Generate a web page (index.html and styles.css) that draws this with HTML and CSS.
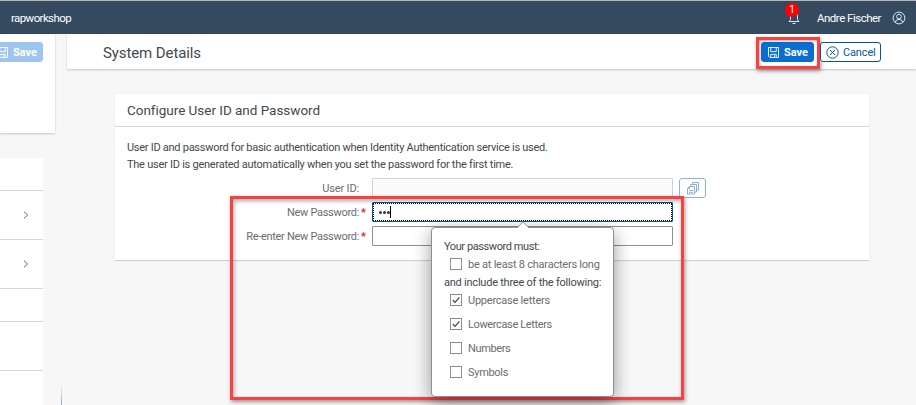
FILE: index.html
```html
<!DOCTYPE html>
<html lang="en">
<head>
<meta charset="utf-8">
<title>System Details</title>
<link rel="stylesheet" href="styles.css">
</head>
<body>
<header class="shell">
  <span class="brand">rapworkshop</span>
  <div class="bell">
    <svg width="12" height="14" viewBox="0 0 12 14" fill="none" stroke="#d1e8ff"><path d="M1 10.5H11L9.5 8.5V4.5Q9.5 1.5 6 1.5T2.5 4.5V8.5ZM4.5 12.5H7.5"/></svg>
    <span class="badge">1</span>
  </div>
  <span class="user">Andre Fischer</span>
  <svg class="avatar" width="14" height="14" viewBox="0 0 14 14" fill="none" stroke="#d1e8ff"><circle cx="7" cy="7" r="5.9"/><circle cx="7" cy="5.6" r="2.3"/><path d="M3.3 11.3Q3.8 8.3 7 8.3T10.700 11.300"/></svg>
</header>
<div class="layout">
  <aside class="side">
    <div class="side-head">
      <button class="btn primary faded"><svg width="11" height="11" viewBox="0 0 12 12" fill="none" stroke="currentColor"><path d="M.5.5H11.500V11.500H2L.5 10ZM3 .5V5H9V.5M3 11.500V8H9V11.500M7 9V11"/></svg><span>Save</span></button>
    </div>
    <div class="list">
      <div class="row short"></div>
      <div class="row"><svg width="6" height="8" viewBox="0 0 6 8" fill="none" stroke="#6a6d70"><path d="M1 .7L4.700 4L1 7.300"/></svg></div>
      <div class="row"><svg width="6" height="8" viewBox="0 0 6 8" fill="none" stroke="#6a6d70"><path d="M1 .7L4.700 4L1 7.300"/></svg></div>
      <div class="row short"></div>
      <div class="row"></div>
      <div class="row"></div>
    </div>
    <i class="splitter"></i>
  </aside>
  <main class="main">
    <div class="titlebar">
      <h1>System Details</h1>
      <div class="actions">
        <button class="btn primary"><svg width="11" height="11" viewBox="0 0 12 12" fill="none" stroke="currentColor"><path d="M.5.5H11.500V11.500H2L.5 10ZM3 .5V5H9V.5M3 11.500V8H9V11.500M7 9V11"/></svg><span>Save</span><i class="mark mark-save"></i></button>
        <button class="btn outline"><svg width="13" height="13" viewBox="0 0 13 13" fill="none" stroke="currentColor"><circle cx="6.500" cy="6.500" r="5.700"/><path d="M4 4L9 9M9 4L4 9"/></svg><span>Cancel</span></button>
      </div>
    </div>
    <section class="card">
      <h2><span>Configure User ID and Password</span></h2>
      <div class="desc">
        <p><span class="d1">User ID and password for basic authentication when Identity Authentication service is used.</span></p>
        <p><span class="d2">The user ID is generated automatically when you set the password for the first time.</span></p>
      </div>
      <div class="form">
        <label class="l1">User ID:</label><b></b><div class="input readonly"></div>
        <button class="copy"><svg width="12" height="13" viewBox="0 0 12 13" fill="none" stroke="currentColor" stroke-width=".9"><path d="M2.500 4.500H7.500V12H.5V6.500ZM2.500 4.500V6.500H.5M2 8.500H6M2 10.300H6M3.500 4.500V2.500H9.500V10H7.500M5.500 2.500V.5H11.500V8H9.500"/></svg></button>
        <label class="l2">New Password:</label><b>*</b><div class="input focused"><i></i><i></i><i></i><em></em></div><span></span>
        <label class="l3">Re-enter New Password:</label><b>*</b><div class="input"></div><span></span>
      </div>
    </section>
  </main>
</div>
<i class="mark mark-form"></i>
<div class="popover">
  <svg class="arrow" width="14" height="7" viewBox="0 0 14 7"><path d="M1 7L7 .8L13 7" fill="#fff" stroke="#8c9096"/></svg>
  <div class="ptext p1"><span>Your password must:</span></div>
  <div class="check c1"><i></i><span>be at least 8 characters long</span></div>
  <div class="ptext p2"><span>and include three of the following:</span></div>
  <div class="check tall c2"><i><svg width="10" height="10" viewBox="0 0 10 10" fill="none" stroke="#45494d" stroke-width="1.200"><path d="M1.800 5L4 7.300L8.300 2.500"/></svg></i><span>Uppercase letters</span></div>
  <div class="check tall c3"><i><svg width="10" height="10" viewBox="0 0 10 10" fill="none" stroke="#45494d" stroke-width="1.200"><path d="M1.800 5L4 7.300L8.300 2.500"/></svg></i><span>Lowercase Letters</span></div>
  <div class="check tall c4"><i></i><span>Numbers</span></div>
  <div class="check tall c5"><i></i><span>Symbols</span></div>
</div>
</body>
</html>
```
FILE: styles.css
```css
* { box-sizing: border-box; }
body {
  margin: 0;
  width: 916px;
  height: 405px;
  overflow: hidden;
  position: relative;
  background: #f7f7f7;
  color: #45484c;
  font: 11px/18px Roboto, "Liberation Sans", sans-serif;
}
svg { display: block; flex: none; }
button { font: inherit; margin: 0; }
span { white-space: nowrap; }

.shell {
  height: 34px;
  border-top: 1px solid #b4b6b8;
  background: #354a5f;
  color: #fff;
  display: flex;
  align-items: center;
  padding: 1px 10px 0 11px;
}
.brand { font-size: 11.500px; letter-spacing: -.6px; margin-right: auto; }
.bell { position: relative; margin-right: 17px; }
.badge {
  position: absolute;
  left: -3px;
  top: -8px;
  width: 14px;
  height: 14px;
  border-radius: 50%;
  background: #f00;
  font-size: 10px;
  line-height: 14px;
  text-align: center;
}
.user { font-size: 11.500px; letter-spacing: -.5px; width: 64px; }
.avatar { margin-left: 11px; }

.layout { display: grid; grid-template-columns: 55px 849px; column-gap: 12px; height: 371px; }
.side { position: relative; }
.side-head { height: 99px; background: #fff; box-shadow: 0 1px 2px #0003; overflow: hidden; padding-top: 8px; display: flex; align-items: flex-start; }
.list { margin-top: 25px; width: 43px; background: #fff; }
.row { height: 49px; border-bottom: 1px solid #d5d6d7; display: flex; align-items: center; justify-content: flex-end; padding-right: 14px; }
.row.short { height: 33px; }
.splitter { position: absolute; left: 61px; top: 350px; width: 1px; height: 22px; background: linear-gradient(#f7f7f7, #8aa8d6); }

.btn {
  height: 20px;
  border: 1px solid #0854a0;
  border-radius: 3px;
  display: flex;
  align-items: center;
  gap: 4px;
  padding: 0 5px;
  position: relative;
}
.btn span { position: relative; top: 1px; }
.primary { background: #0a6ed1; border-color: #0a6ed1; color: #fff; font-weight: 700; width: 53px; gap: 5px; padding-left: 6px; }
.outline { background: #fff; color: #0854a0; width: 61px; }
.outline span { letter-spacing: -.15px; }
.faded { background: #9dc5ed; border-color: #9dc5ed; margin-left: -10px; }

.titlebar {
  height: 35px;
  background: #fff;
  box-shadow: 0 1px 2px #0003;
  display: flex;
  align-items: center;
  justify-content: space-between;
  padding: 1px 35px 0 36px;
}
h1 { margin: 1px 0 0; font-size: 15px; font-weight: 400; letter-spacing: -.1px; }
.actions { display: flex; gap: 6px; }

.card { margin: 25px 47px 0 48px; height: 167px; background: #fff; border-bottom: 1px solid #d0d1d2; box-shadow: 0 0 2px #0001; }
h2 { margin: 0; height: 33px; border-bottom: 1px solid #d5d6d7; padding: 0 12px; font-size: 13.500px; line-height: 33px; font-weight: 400; letter-spacing: -.03px; }
.desc { padding: 12px 12px 0; }
p { margin: 0; height: 18px; line-height: 18px; }
p + p { margin-top: -1px; }
.d1 { letter-spacing: -.275px; }
.d2 { letter-spacing: -.25px; }
.form { display: grid; grid-template-columns: 245px 12px 301px 27px; column-gap: 0; row-gap: 4px; grid-auto-rows: 20px; line-height: 22px; margin-top: 4px; color: #6a6d70; }
.form label { text-align: right; white-space: nowrap; letter-spacing: -.3px; padding-right: 1px; }
.form .l1 { letter-spacing: -.15px; }
.form b { color: #d22; font-weight: 700; font-size: 11px; line-height: 22px; padding-left: 1px; }
.input { border: 1px solid #89919a; border-radius: 1px; background: #fff; }
.readonly { border-color: #d0d2d4; background: #fafafa; }
.focused { border-color: #0854a0; position: relative; display: flex; align-items: center; gap: 1px; padding-left: 6px; }
.focused::after { content: ""; position: absolute; inset: 0; border: 1px dotted #000; }
.focused i { width: 3px; height: 3px; border-radius: 50%; background: #32363a; margin-top: 1px; }
.focused em { width: 1px; height: 12px; background: #000; margin-left: -1px; }
.copy { margin-left: 6px; width: 27px; height: 20px; border: 1px solid #8bb2da; border-radius: 3px; background: #fff; color: #82aad4; display: flex; align-items: center; justify-content: center; padding: 0; }

.mark { position: absolute; border: 3px solid #fa4141; }
.mark-save { left: -6px; top: -6px; width: 64px; height: 32px; box-shadow: 1px 2px 4px #0006, inset 1px 1px 3px #0005; }
.mark-form { left: 230px; top: 196px; width: 454px; height: 204px; box-shadow: 1px 2px 4px #0006, inset 1px 2px 4px #0005; }

.popover {
  position: absolute;
  left: 431px;
  top: 227px;
  width: 183px;
  height: 170px;
  border: 1px solid #8c9096;
  border-radius: 4px;
  background: #fff;
  box-shadow: 0 5px 18px #0006;
  padding: 9px 12px;
}
.popover span { position: relative; top: 1px; }
.arrow { position: absolute; left: 84px; top: -7px; }
.ptext { height: 18px; }
.check { height: 18px; padding-left: 6px; display: flex; align-items: center; gap: 6px; color: #6a6d70; }
.tall { height: 24px; }
.p1 { letter-spacing: -.42px; }
.p2, .c1, .c2 { letter-spacing: -.23px; }
.c2 { margin-top: -3px; }
.c3, .c4 { letter-spacing: -.37px; }
.c5 { letter-spacing: -.3px; }
.check i { width: 12px; height: 12px; border: 1px solid #89919a; flex: none; }
```
